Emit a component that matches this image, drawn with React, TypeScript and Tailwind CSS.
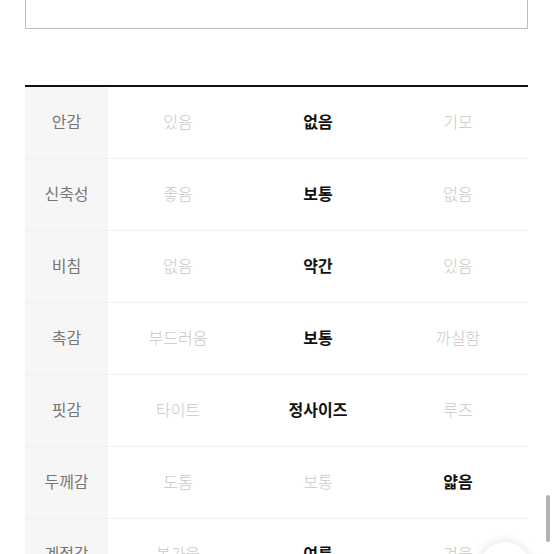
import React from "react";

const rows: { label: string; values: string[]; active: number }[] = [
  { label: "안감", values: ["있음", "없음", "기모"], active: 1 },
  { label: "신축성", values: ["좋음", "보통", "없음"], active: 1 },
  { label: "비침", values: ["없음", "약간", "있음"], active: 1 },
  { label: "촉감", values: ["부드러움", "보통", "까실함"], active: 1 },
  { label: "핏감", values: ["타이트", "정사이즈", "루즈"], active: 1 },
  { label: "두께감", values: ["도톰", "보통", "얇음"], active: 2 },
  { label: "계절감", values: ["봄가을", "여름", "겨울"], active: 1 },
];

export default function App() {
  return (
    <div
      className="relative h-[554px] w-[554px] overflow-hidden bg-white"
      style={{ fontFamily: '"Noto Sans CJK KR", "Noto Sans", sans-serif' }}
    >
      <div className="ml-[25px] w-[503px]">
        <div className="h-[29px] border-x border-b border-[#bdbdbd]" />
        <div className="mt-[56px] border-t-2 border-[#111]">
          {rows.map((r) => (
            <div
              key={r.label}
              className="grid h-[72px] grid-cols-[83px_1fr_1fr_1fr] border-b border-[#efefef]"
            >
              <div className="flex items-center justify-center bg-[#f6f6f6] pb-[3px] text-[16px] text-[#777]">
                {r.label}
              </div>
              {r.values.map((v, i) => (
                <div
                  key={i}
                  className={
                    i === r.active
                      ? "flex items-center justify-center pb-[3px] text-[16px] font-bold text-[#111]"
                      : "flex items-center justify-center pb-[3px] text-[16px] font-light text-[#c8c8c8]"
                  }
                >
                  {v}
                </div>
              ))}
            </div>
          ))}
        </div>
      </div>
      <div className="absolute left-[546px] top-[495px] h-[47px] w-[4px] rounded-full bg-[#b3b3b3]" />
      <div className="absolute left-[480px] top-[542px] h-[50px] w-[50px] rounded-full bg-white shadow-[0_0_12px_rgba(0,0,0,0.12)]" />
    </div>
  );
}
